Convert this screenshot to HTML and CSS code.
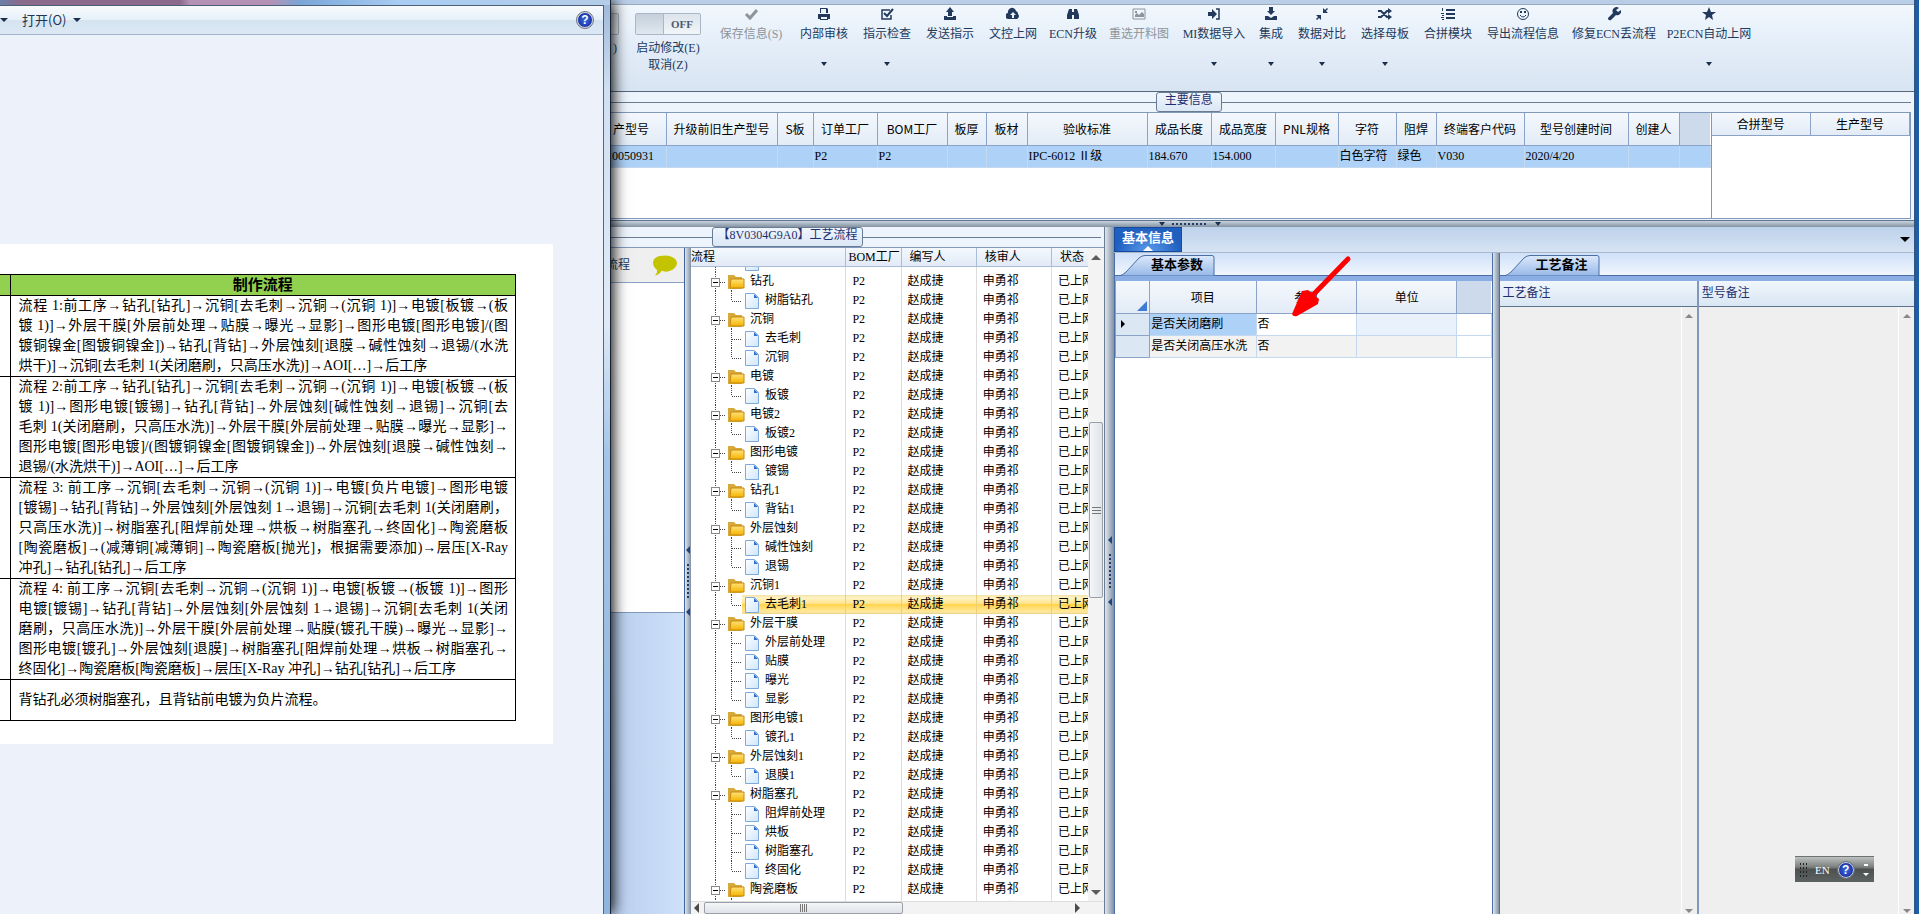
FILE: index.html
```
<!DOCTYPE html>
<html lang="zh-CN">
<head>
    <meta charset="UTF-8">
    <meta name="viewport" content="width=device-width, initial-scale=1">
    <title>工艺流程</title>
    <link rel="stylesheet" href="styles.css">
</head>
<body>
    <!-- picture viewer window -->
    <div class="viewer">
        <div class="viewer-title"></div>
        <div class="viewer-bar">
            <i class="caret"></i>
            <button type="button" class="open">打开(O) <i class="caret"></i></button>
            <button type="button" class="help" aria-label="帮助">?</button>
        </div>
        <div class="viewer-body">
            <div class="paper">
                <table class="doc">
                    <colgroup><col class="doc-left"><col></colgroup>
                    <thead>
                        <tr><th></th><th>制作流程</th></tr>
                    </thead>
                    <tbody>
                        <tr><td></td><td>
                            <span>流程 1:前工序→钻孔[钻孔]→沉铜[去毛刺→沉铜→(沉铜 1)]→电镀[板镀→(板</span>
                            <span>镀 1)]→外层干膜[外层前处理→贴膜→曝光→显影]→图形电镀[图形电镀]/(图</span>
                            <span>镀铜镍金[图镀铜镍金])→钻孔[背钻]→外层蚀刻[退膜→碱性蚀刻→退锡/(水洗</span>
                            <span class="end">烘干)]→沉铜[去毛刺 1(关闭磨刷，只高压水洗)]→AOI[…]→后工序</span>
                        </td></tr>
                        <tr><td></td><td>
                            <span>流程 2:前工序→钻孔[钻孔]→沉铜[去毛刺→沉铜→(沉铜 1)]→电镀[板镀→(板</span>
                            <span>镀 1)]→图形电镀[镀锡]→钻孔[背钻]→外层蚀刻[碱性蚀刻→退锡]→沉铜[去</span>
                            <span>毛刺 1(关闭磨刷，只高压水洗)]→外层干膜[外层前处理→贴膜→曝光→显影]→</span>
                            <span>图形电镀[图形电镀]/(图镀铜镍金[图镀铜镍金])→外层蚀刻[退膜→碱性蚀刻→</span>
                            <span class="end">退锡/(水洗烘干)]→AOI[…]→后工序</span>
                        </td></tr>
                        <tr><td></td><td>
                            <span>流程 3: 前工序→沉铜[去毛刺→沉铜→(沉铜 1)]→电镀[负片电镀]→图形电镀</span>
                            <span>[镀锡]→钻孔[背钻]→外层蚀刻[外层蚀刻 1→退锡]→沉铜[去毛刺 1(关闭磨刷，</span>
                            <span>只高压水洗)]→树脂塞孔[阻焊前处理→烘板→树脂塞孔→终固化]→陶瓷磨板</span>
                            <span>[陶瓷磨板]→(减薄铜[减薄铜]→陶瓷磨板[抛光]，根据需要添加)→层压[X-Ray</span>
                            <span class="end">冲孔]→钻孔[钻孔]→后工序</span>
                        </td></tr>
                        <tr><td></td><td>
                            <span>流程 4: 前工序→沉铜[去毛刺→沉铜→(沉铜 1)]→电镀[板镀→(板镀 1)]→图形</span>
                            <span>电镀[镀锡]→钻孔[背钻]→外层蚀刻[外层蚀刻 1→退锡]→沉铜[去毛刺 1(关闭</span>
                            <span>磨刷，只高压水洗)]→外层干膜[外层前处理→贴膜(镀孔干膜)→曝光→显影]→</span>
                            <span>图形电镀[镀孔]→外层蚀刻[退膜]→树脂塞孔[阻焊前处理→烘板→树脂塞孔→</span>
                            <span class="end">终固化]→陶瓷磨板[陶瓷磨板]→层压[X-Ray 冲孔]→钻孔[钻孔]→后工序</span>
                        </td></tr>
                        <tr class="note"><td></td><td><span class="end">背钻孔必须树脂塞孔，且背钻前电镀为负片流程。</span></td></tr>
                    </tbody>
                </table>
            </div>
        </div>
    </div>

    <!-- main program -->
    <div class="app">
        <div class="caption"></div>
        <div class="ribbon">
            <div class="switch-item cut"><div class="switch"></div><span>)</span></div>
            <div class="switch-item">
                <button type="button" class="switch"><i></i><b>OFF</b></button>
                <span>启动修改(E)</span>
                <span>取消(Z)</span>
            </div>
            <button type="button" class="tool off"><svg viewBox="0 0 14 14"><path d="M2 7l4 4 7-8" fill="none" stroke="currentColor" stroke-width="3"/></svg><span>保存信息(S)</span></button>
            <button type="button" class="tool"><svg viewBox="0 0 14 14"><path d="M3 1h7l1 1v4H3zM1 7h12v5h-2V9H3v3H1z"/><path d="M4 2h5v4H4z" fill="#eef4fb"/><path d="M3 9h8v4H3z"/><path d="M4 10h6v2H4z" fill="#eef4fb"/></svg><span>内部审核</span><i class="caret"></i></button>
            <button type="button" class="tool"><svg viewBox="0 0 14 14"><path d="M11 8v4H2V3h8" fill="none" stroke="currentColor" stroke-width="1.5"/><path d="M4 6l3 3 6-7" fill="none" stroke="currentColor" stroke-width="2"/></svg><span>指示检查</span><i class="caret"></i></button>
            <button type="button" class="tool"><svg viewBox="0 0 14 14"><path d="M7 0l4 5H9v4H5V5H3zM1 9h3v1h6V9h3v4H1z"/></svg><span>发送指示</span></button>
            <button type="button" class="tool"><svg viewBox="0 0 14 14"><path d="M3 12a3 3 0 0 1-1-6 4 4 0 0 1 8-2 3 3 0 0 1 2 3 3 3 0 0 1-1 5z"/><path d="M7 5l3 3H8v3H6V8H4z" fill="#eef4fb"/></svg><span>文控上网</span></button>
            <button type="button" class="tool"><svg viewBox="0 0 14 14"><path d="M3 2h3v3h2V2h3l2 6v4H8V8H6v4H1V8z"/></svg><span>ECN升级</span></button>
            <button type="button" class="tool off"><svg viewBox="0 0 14 14"><path d="M1 2h12v10H1z" fill="none" stroke="currentColor"/><path d="M3 10V8l2-2 2 2 3-3 2 2v3zM3 4h2v2H3z"/></svg><span>重选开料图</span></button>
            <button type="button" class="tool"><svg viewBox="0 0 14 14"><path d="M1 5h4V2l5 5-5 5V9H1z"/><path d="M9 2h3v10H9" fill="none" stroke="currentColor" stroke-width="1.5"/></svg><span>MI数据导入</span><i class="caret"></i></button>
            <button type="button" class="tool"><svg viewBox="0 0 14 14"><path d="M5 0h4v4h2L7 8 3 4h2zM1 9h3l3 2 3-2h3v4H1z"/></svg><span>集成</span><i class="caret"></i></button>
            <button type="button" class="tool"><svg viewBox="0 0 14 14"><path d="M8 1v5h5l-2-2 2-2-1-1-2 2zM6 13V8H1l2 2-2 2 1 1 2-2z"/></svg><span>数据对比</span><i class="caret"></i></button>
            <button type="button" class="tool"><svg viewBox="0 0 14 14"><path d="M0 4h3l6 6h2M0 10h3l6-6h2" fill="none" stroke="currentColor" stroke-width="2"/><path d="M10 1l4 3-4 3zM10 7l4 3-4 3z"/></svg><span>选择母板</span><i class="caret"></i></button>
            <button type="button" class="tool"><svg viewBox="0 0 14 14"><path d="M5 2h9v2H5zM5 6h9v2H5zM5 10h9v2H5zM1 1h1v3H1zM0 6h3v1H0zM1 8h2v1H1zM0 10h3v1H0zM1 12h2v1H1z"/></svg><span>合拼模块</span></button>
            <button type="button" class="tool"><svg viewBox="0 0 14 14"><circle cx="7" cy="7" r="5.5" fill="none" stroke="currentColor"/><path d="M4 8q3 4 6 0" fill="none" stroke="currentColor"/><path d="M4 4h2v2H4zM8 4h2v2H8z"/></svg><span>导出流程信息</span></button>
            <button type="button" class="tool"><svg viewBox="0 0 14 14"><path d="M1 11l5-5a4 4 0 0 1 6-5L9 3l2 2 3-2a4 4 0 0 1-5 5l-5 5a2 2 0 0 1-3-2z"/></svg><span>修复ECN丢流程</span></button>
            <button type="button" class="tool"><svg viewBox="0 0 14 14"><path d="M7 0l2 5h5l-4 3 1 5-4-3-4 3 1-5-4-3h5z"/></svg><span>P2ECN自动上网</span><i class="caret"></i></button>
        </div>

        <div class="info">
            <div class="group-title main-title"><span>主要信息</span></div>
            <div class="info-tables">
                <div class="info-left">
                    <table class="grid">
                        <colgroup>
                            <col style="width:55px"><col style="width:111px"><col style="width:36px"><col style="width:64px"><col style="width:70px">
                            <col style="width:39px"><col style="width:41px"><col style="width:120px"><col style="width:64px"><col style="width:64px">
                            <col style="width:63px"><col style="width:58px"><col style="width:40px"><col style="width:88px"><col style="width:104px">
                            <col style="width:51px"><col style="width:31px">
                        </colgroup>
                        <thead>
                            <tr><th class="left">产型号</th><th>升级前旧生产型号</th><th>S板</th><th>订单工厂</th><th>BOM工厂</th><th>板厚</th><th>板材</th><th>验收标准</th><th>成品长度</th><th>成品宽度</th><th>PNL规格</th><th>字符</th><th>阻焊</th><th>终端客户代码</th><th>型号创建时间</th><th>创建人</th><th class="blank"></th></tr>
                        </thead>
                        <tbody>
                            <tr><td>0050931</td><td></td><td></td><td>P2</td><td>P2</td><td></td><td></td><td>IPC-6012 Ⅱ级</td><td>184.670</td><td>154.000</td><td></td><td>白色字符</td><td>绿色</td><td>V030</td><td>2020/4/20</td><td></td><td></td></tr>
                        </tbody>
                    </table>
                </div>
                <div class="info-right">
                    <table class="grid small">
                        <thead><tr><th>合拼型号</th><th>生产型号</th></tr></thead>
                    </table>
                </div>
            </div>
        </div>

        <div class="split-h"><i class="caret"></i><i class="dots"></i><i class="caret"></i></div>

        <div class="lower">
            <div class="process">
                <div class="group-title process-title"><span>【8V0304G9A0】工艺流程</span></div>
                <div class="process-row">
                    <div class="side">
                        <div class="side-head">流程
                            <svg viewBox="0 0 25 21"><path d="M13 0c7 0 12 4 12 8s-5 9-12 9l-4-1q-2 4-7 5 3-3 2-6-4-3-4-7 0-8 13-8z" fill="#c3c300"/></svg>
                        </div>
                        <div class="side-body"></div>
                    </div>
                    <div class="split-v"><i class="tri"></i><i class="dots"></i><i class="tri"></i></div>
                    <div class="tree">
                        <div class="tree-main">
                            <div class="tree-scroll" id="treescroll">
                                <table>
                                    <colgroup><col class="c-name"><col class="c-bom"><col class="c-writer"><col class="c-check"><col class="c-state"></colgroup>
                                    <thead>
                                        <tr><th>流程</th><th class="tight">BOM工厂</th><th>编写人</th><th>核审人</th><th>状态</th></tr>
                                    </thead>
                                    <tbody id="treebody"></tbody>
                                </table>
                            </div>
                            <div class="bar-v"><i class="up"></i><div class="thumb"></div><i class="down"></i></div>
                        </div>
                        <div class="bar-h"><i class="prev"></i><div class="thumb"></div><i class="next"></i></div>
                    </div>
                </div>
            </div>
            <div class="split-v wide"><i class="tri"></i><i class="dots"></i><i class="tri"></i></div>

            <div class="details">
                <div class="dock"><button type="button">基本信息</button><i class="caret"></i></div>
                <div class="detail-row">
                    <div class="params">
                        <div class="tabs">
                            <svg viewBox="0 0 96 21"><use href="#tabshape"/></svg><b>基本参数</b>
                        </div>
                        <table class="grid">
                            <colgroup><col style="width:34px"><col style="width:106px"><col style="width:100px"><col style="width:100px"><col style="width:34px"></colgroup>
                            <thead><tr><th class="corner"></th><th>项目</th><th>参数</th><th>单位</th><th class="blank"></th></tr></thead>
                            <tbody>
                                <tr><td class="rowhead"><i></i></td><td class="sel">是否关闭磨刷</td><td>否</td><td class="pale"></td><td></td></tr>
                                <tr class="alt"><td class="rowhead"></td><td>是否关闭高压水洗</td><td>否</td><td></td><td class="none"></td></tr>
                            </tbody>
                        </table>
                        <svg class="mark" viewBox="0 0 64 66"><path d="M57 5L20 43" stroke="#f00" stroke-width="5" stroke-linecap="round"/><path d="M1 60L11 37l6-1 11 9-1 5-21 12q-4 1-5-2z" fill="#f00"/></svg>
                    </div>
                    <div class="split-v"></div>
                    <div class="notes">
                        <div class="tabs">
                            <svg viewBox="0 0 96 21"><use href="#tabshape"/></svg><b>工艺备注</b>
                        </div>
                        <div class="note-cols">
                            <div class="note-col first">
                                <label for="note1">工艺备注</label>
                                <div class="note-box"><textarea id="note1"></textarea><div class="bar-v"><i class="up"></i><i class="down"></i></div></div>
                            </div>
                            <div class="note-col">
                                <label for="note2">型号备注</label>
                                <div class="note-box"><textarea id="note2"></textarea><div class="bar-v"><i class="up"></i><i class="down"></i></div></div>
                            </div>
                        </div>
                    </div>
                </div>
            </div>
        </div>
    </div>

    <!-- input language bar -->
    <div class="lang">
        <i class="grip"></i><span>EN</span><button type="button" class="help" aria-label="帮助">?</button>
        <svg viewBox="0 0 6 14"><path d="M1 1h4v2H1zM0 10h6l-3 3z" fill="#fff"/></svg>
    </div>

    <svg class="defs">
        <defs>
            <linearGradient id="tabfill" x1="0" y1="0" x2="0" y2="1"><stop offset="0" stop-color="#dce9fb"/><stop offset="1" stop-color="#96b8e8"/></linearGradient>
            <linearGradient id="gold" x1="0" y1="0" x2="0" y2="1"><stop offset="0" stop-color="#ffe27a"/><stop offset="1" stop-color="#f5b400"/></linearGradient>
            <linearGradient id="sheet" x1="0" y1="0" x2="1" y2="1"><stop offset="0" stop-color="#fff"/><stop offset="1" stop-color="#cfe6fb"/></linearGradient>
            <path id="tabshape" d="M0 21Q4 20 7 17L20 3q3-2.500 6-2.500H93q2 0 2 2V21z" fill="url(#tabfill)" stroke="#4a6ea5"/>
            <g id="folder"><path d="M0 1h6l2 2h6v12H0z" fill="#d7a83a"/><path d="M3 5h13v9H2z" fill="url(#gold)" stroke="#c88a10"/></g>
            <g id="file"><path d="M.5.5h9l4 4v11H.5z" fill="url(#sheet)" stroke="#7da9dd"/><path d="M9 1l4 4H9z" fill="#2f6fd0"/></g>
        </defs>
    </svg>
    <script src="script.js"></script>
</body>
</html>
```
FILE: styles.css
```
* {
    box-sizing: border-box;
}
body {
    margin: 0;
    display: flex;
    height: 100vh;
    overflow: hidden;
    background-color: #1d5ea8;
    color: #000;
    font-family: "Liberation Serif", "Noto Sans CJK SC", serif;
    font-size: 12px;
    line-height: 16px;
}
button {
    margin: 0;
    padding: 0;
    border: 0;
    background: none;
    color: inherit;
    font: inherit;
}
table {
    border-collapse: collapse;
    table-layout: fixed;
    width: 100%;
}
i {
    display: block;
    flex: none;
}
.defs {
    position: absolute;
    width: 0;
    height: 0;
}
.caret {
    width: 0;
    border: 3px solid transparent;
    border-top: 4px solid #1b2f4d;
    border-bottom: 0;
}

/* picture viewer */
.viewer {
    flex: none;
    width: 611px;
    position: relative;
    z-index: 2;
    display: flex;
    flex-direction: column;
    border-right: 1px solid #16202e;
    box-shadow: 2px 0 14px #000;
    background: linear-gradient(#9db8d8, #cfe0f3 10%, #dfeaf6 35%, #a3c4e8 50%, #8fb4df);
}
.viewer-title {
    height: 5px;
    background: linear-gradient(90deg, #6a7fa8, #8b6a8c 20px, #8b6a8c 180px, #b592b3 190px, #b592b3 270px, #7aa6d8 300px, #a9cdf3 400px, #b5cde8);
}
.viewer-bar {
    display: flex;
    align-items: center;
    height: 30px;
    margin-right: 6px;
    padding-right: 10px;
    border: solid #4a6078;
    border-width: 1px 1px 1px 0;
    border-bottom-color: #9fb4ca;
    background: linear-gradient(#f8fbfe, #e6f0f8 50%, #d5e3f1 51%, #dce8f4);
    color: #1e3554;
    font-family: "Noto Sans CJK SC", sans-serif;
    font-size: 13px;
}
.viewer-bar .open {
    display: flex;
    align-items: center;
    gap: 7px;
    margin-left: 14px;
}
.viewer-bar .caret {
    border-width: 4px 4px 0;
}
.help {
    width: 16px;
    height: 16px;
    margin-left: auto;
    border: 1px solid #c9d0dc;
    border-radius: 8px;
    outline: 1px solid #6b7484;
    background: radial-gradient(#3f6be0, #0e1f92);
    color: #fff;
    font: bold 12px/14px "Liberation Sans", sans-serif;
}
.viewer-body {
    flex: 1;
    margin-right: 6px;
    padding-top: 209px;
    border-right: 1px solid #4a6a90;
    background-color: #edf2fa;
}
.paper {
    width: 553px;
    padding: 30px 37px 23px 0;
    background-color: #fff;
}
.doc {
    font-size: 14px;
    line-height: 20px;
}
.doc .doc-left {
    width: 10px;
}
.doc th, .doc td {
    padding: 0;
    border: 1px solid #000;
}
.doc th:first-child, .doc td:first-child {
    border-left: 0;
}
.doc th {
    background-color: #92d050;
    font-size: 15px;
}
.doc td + td {
    padding: 0 7px 0 8px;
}
.doc span {
    display: block;
    white-space: nowrap;
    text-align: justify;
    text-align-last: justify;
}
.doc .end {
    text-align-last: left;
}
.doc .note {
    height: 41px;
}

/* main program */
.app {
    flex: 1;
    min-width: 0;
    display: flex;
    flex-direction: column;
    margin-right: 3px;
    border-right: 2px solid #33557f;
    background-color: #eef4fc;
}
.caption {
    height: 5px;
    border-bottom: 1px solid #9aaabd;
    background-color: #b9cde6;
}
.ribbon {
    display: grid;
    grid-template-columns: 8px 68px 68px 48px 48px 48px 48px 42px 60px 60px 24px 48px 48px 48px 72px 80px 80px;
    column-gap: 15px;
    height: 87px;
    padding-top: 2px;
    border-bottom: 1px solid #56677c;
    background: linear-gradient(#f1f7fd, #e3edf8 50%, #d8e4f2);
    color: #22395c;
}
.switch-item {
    display: flex;
    flex-direction: column;
    align-items: center;
    padding-top: 6px;
    white-space: nowrap;
}
.switch-item span {
    line-height: 17px;
}
.switch {
    display: flex;
    align-items: center;
    width: 66px;
    height: 22px;
    margin-bottom: 5px;
    border: 1px solid #a9b6c6;
    border-radius: 2px;
    background: linear-gradient(#dce3eb, #f2f6fa);
    color: #4c5a6e;
}
.switch i {
    width: 28px;
    height: 20px;
    border-right: 1px solid #a9b6c6;
    background: linear-gradient(#c5d0dc, #dfe7ef);
}
.switch b {
    flex: 1;
    font-size: 11px;
}
.cut .switch {
    width: 8px;
    border-left: 0;
}
.tool {
    display: grid;
    grid-template-rows: 16px 16px 28px;
    justify-items: center;
    justify-content: center;
    align-content: start;
    row-gap: 3px;
    white-space: nowrap;
}
.tool svg {
    width: 14px;
    height: 14px;
    fill: currentColor;
}
.tool .caret {
    align-self: end;
    margin-bottom: 7px;
}
.tool.off {
    color: #8d949c;
}

.group-title {
    display: flex;
    align-items: center;
    height: 20px;
    padding-right: 3px;
    color: #1f2f6e;
}
.group-title::before, .group-title::after {
    content: "";
    border-top: 1px solid #6a7c92;
}
.group-title span {
    height: 20px;
    padding: 0 8px;
    border: 1px solid #6a7c92;
    border-radius: 3px;
    background: linear-gradient(#eef5fd, #dbe7f5);
    line-height: 14px;
    white-space: nowrap;
}
.main-title::before {
    flex: 547;
}
.main-title::after {
    flex: 692;
}
.info {
    height: 129px;
    border-bottom: 1px solid #5f738c;
}
.info-tables {
    display: flex;
    height: 107px;
    margin-right: 3px;
    border: solid #7f98bc;
    border-width: 1px 1px 1px 0;
    background-color: #fff;
}
.info-left {
    flex: 1099;
    border-right: 1px solid #7f98bc;
}
.info-right {
    flex: 200;
}
.grid th {
    height: 32px;
    padding: 0;
    border: solid #8ba3c7;
    border-width: 0 1px 1px 0;
    background: linear-gradient(#f4f8fd, #e2ebf6);
    font-family: "Noto Sans CJK SC", sans-serif;
    font-weight: normal;
    white-space: nowrap;
}
.grid .blank {
    border-right: 0;
    background: #cddaeb;
}
.grid .left {
    padding-left: 2px;
    text-align: left;
}
.grid.small th {
    height: 22px;
}
.grid td {
    height: 22px;
    padding: 0 0 0 1px;
    border: solid #c4d8f0;
    border-width: 0 1px 1px 0;
    white-space: nowrap;
    overflow: hidden;
}
.info .grid td {
    background-color: #add1f7;
}
.split-h {
    display: flex;
    align-items: center;
    justify-content: center;
    gap: 7px;
    height: 6px;
    padding-right: 146px;
    background: linear-gradient(#c9d4df, #8492a1);
}
.split-h .dots {
    width: 36px;
    height: 2px;
    background: repeating-linear-gradient(90deg, #1f3a6b 0 2px, transparent 2px 4px);
}
.lower {
    flex: 1;
    min-height: 0;
    display: flex;
}

/* process tree */
.process {
    flex: none;
    width: 494px;
    display: flex;
    flex-direction: column;
    border-right: 1px solid #6a7c92;
}
.process-title::before {
    width: 101px;
}
.process-title::after {
    flex: 1;
}
.process-title span {
    width: 151px;
    padding: 0;
    text-align: center;
}
.process-row {
    flex: 1;
    min-height: 0;
    display: flex;
    border-top: 1px solid #7f98bc;
}
.side {
    width: 74px;
    display: flex;
    flex-direction: column;
    border-right: 1px solid #3f659c;
    background: linear-gradient(90deg, #b9cfee, #cfe1f9);
}
.side-head {
    display: flex;
    align-items: center;
    justify-content: space-between;
    height: 35px;
    margin-left: -5px;
    padding-right: 7px;
    border-bottom: 1px solid #8ba3c7;
    background-color: #efefef;
    color: #22395c;
}
.side-head svg {
    width: 24px;
    height: 21px;
}
.side-body {
    height: 330px;
    border-bottom: 1px solid #7f98bc;
    background-color: #fff;
}
.split-v {
    flex: none;
    width: 6px;
    display: flex;
    flex-direction: column;
    align-items: center;
    justify-content: center;
    gap: 10px;
    background: linear-gradient(90deg, #dfe6ee, #8291a3);
}
.split-v.wide {
    width: 9px;
}
.split-v .dots {
    width: 2px;
    height: 34px;
    background: repeating-linear-gradient(#1f3a6b 0 2px, transparent 2px 4px);
}
.split-v .tri {
    border: 4px solid transparent;
    border-right: 4px solid #24427a;
    border-left: 0;
}
.tree {
    flex: 1;
    min-width: 0;
    display: flex;
    flex-direction: column;
    background-color: #fff;
}
.tree-main {
    flex: 1;
    min-height: 0;
    display: flex;
}
.tree-scroll {
    flex: 1;
    min-width: 0;
    overflow: hidden;
}
.tree table {
    border-collapse: separate;
    border-spacing: 0;
}
.c-name {
    width: 155px;
}
.c-bom {
    width: 55px;
}
.c-writer, .c-check {
    width: 75px;
}
.c-state {
    width: 36px;
}
.tree th {
    position: sticky;
    top: 0;
    height: 19px;
    padding: 0 0 0 8px;
    border-right: 1px solid #a9bdd8;
    border-bottom: 1px solid #a9bdd8;
    background: linear-gradient(#f4f8fd, #e0eaf6);
    font-weight: normal;
    line-height: 18px;
    text-align: left;
    white-space: nowrap;
}
.tree th:first-child {
    padding-left: 0;
}
.tree .tight {
    padding-left: 2px;
}
.tree td {
    height: 19px;
    padding: 0 0 0 6px;
    border-right: 1px solid #dcdcdc;
    line-height: 19px;
    white-space: nowrap;
    overflow: hidden;
}
.tree th:last-child, .tree td:last-child {
    border-right: 0;
}
.tree td:first-child {
    padding: 0;
}
.node {
    display: flex;
    height: 19px;
}
.node svg {
    flex: none;
    width: 59px;
    height: 19px;
}
.node.child svg {
    width: 74px;
}
.tree .picked td {
    border-right-color: #f0cf70;
    background: linear-gradient(#f4e3a8, #fff3c4 15%, #ffe48c 45%, #ffd54f 50%, #ffe9a0 90%, #e6cf86) no-repeat;
}
.tree .picked td:first-child {
    background-position: 51px 0;
}
.bar-v {
    flex: none;
    width: 16px;
    display: flex;
    flex-direction: column;
    align-items: center;
    padding: 7px 0 6px;
    background-color: #f3f3f3;
}
.bar-v .up, .bar-v .down {
    border: 5px solid transparent;
    border-top: 0;
    border-bottom: 5px solid #5d5d5d;
}
.bar-v .down {
    margin-top: auto;
    border-top: 5px solid #5d5d5d;
    border-bottom: 0;
}
.thumb {
    border: 1px solid #9aa0a8;
    border-radius: 2px;
}
.bar-v .thumb {
    width: 14px;
    height: 176px;
    margin-top: 162px;
    background: repeating-linear-gradient(#777 0 1px, transparent 1px 3px) center / 9px 7px no-repeat, linear-gradient(90deg, #f4f6f8, #dfe3e8);
}
.bar-h {
    flex: none;
    display: flex;
    align-items: center;
    height: 13px;
    padding: 0 24px 0 3px;
    border-top: 1px solid #ddd;
    background-color: #f3f3f3;
}
.bar-h .prev, .bar-h .next {
    border: 5px solid transparent;
    border-left: 0;
    border-right: 5px solid #4a4a4a;
}
.bar-h .next {
    margin-left: auto;
    border-right: 0;
    border-left: 5px solid #4a4a4a;
}
.bar-h .thumb {
    width: 199px;
    height: 12px;
    margin-left: 5px;
    background: repeating-linear-gradient(90deg, #777 0 1px, transparent 1px 2px) center / 7px 8px no-repeat, linear-gradient(#f4f6f8, #dfe3e8);
}

/* detail panels */
.details {
    flex: 1;
    min-width: 0;
    display: flex;
    flex-direction: column;
}
.dock {
    display: flex;
    align-items: center;
    justify-content: space-between;
    height: 26px;
    padding-right: 4px;
    border-bottom: 1px solid #a9b9cd;
    background: linear-gradient(#bdd2eb, #d6e3f4);
}
.dock button {
    position: relative;
    width: 68px;
    height: 25px;
    padding-bottom: 3px;
    border: 1px solid #164a9a;
    background: radial-gradient(ellipse at bottom, #5b9bea, #1f5fc0 70%);
    color: #fff;
    font-size: 13px;
    font-weight: bold;
}
.dock button::after {
    content: "";
    position: absolute;
    left: 28px;
    bottom: 0;
    border: 5px solid transparent;
    border-top: 0;
    border-bottom-color: #fff;
}
.dock .caret {
    border-width: 5px 5px 0;
    border-top-color: #000;
}
.detail-row {
    flex: 1;
    min-height: 0;
    display: flex;
}
.params {
    flex: 377;
    min-width: 0;
    position: relative;
    border: solid #4a6ea5;
    border-width: 0 1px;
    background-color: #fff;
}
.params .grid {
    border-left: 1px solid #8ba3c7;
}
.tabs {
    display: flex;
    align-items: flex-end;
    position: relative;
    height: 28px;
    padding-left: 4px;
    border-bottom: 5px solid #8bafe4;
    background: linear-gradient(#cfe0f8, #f2f7fe);
    box-shadow: inset 0 -1px #4a6ea5;
}
.tabs svg {
    width: 96px;
    height: 21px;
}
.tabs b {
    position: absolute;
    left: 36px;
    top: 4px;
    font-size: 13px;
}
.corner {
    position: relative;
}
.corner::after {
    content: "";
    position: absolute;
    right: 2px;
    bottom: 2px;
    border: 5px solid #3f7ad6;
    border-top-color: transparent;
    border-left-color: transparent;
}
.grid td.rowhead {
    padding-left: 5px;
    border-color: #8ba3c7;
    background-color: #dce7f4;
}
.rowhead i {
    width: 0;
    border: 4px solid transparent;
    border-left-color: #000;
    border-right: 0;
}
.sel {
    background-color: #add1f7;
}
.pale {
    background-color: #e8f1fc;
}
.alt td {
    background-color: #f2f2f2;
}
.alt .none {
    background-color: #fff;
}
.mark {
    position: absolute;
    left: 176px;
    top: 1px;
    width: 64px;
    height: 66px;
}
.notes {
    flex: 415;
    min-width: 0;
    display: flex;
    flex-direction: column;
    border-left: 1px solid #4a6ea5;
}
.note-cols {
    flex: 1;
    min-height: 0;
    display: flex;
}
.note-col {
    flex: 216;
    display: flex;
    flex-direction: column;
}
.note-col.first {
    flex: 198;
    border-right: 2px solid #7f98bc;
}
.note-col label {
    height: 26px;
    padding-left: 3px;
    border-bottom: 1px solid #5f738c;
    background: linear-gradient(#f0f6fc, #d9e6f3);
    color: #1f2f6e;
    line-height: 24px;
}
.note-box {
    flex: 1;
    min-height: 0;
    display: flex;
    background-color: #efefef;
}
.note-box textarea {
    flex: 1;
    min-width: 0;
    border: 0;
    background: none;
    resize: none;
}
.note-box .bar-v {
    padding: 7px 0 1px;
    border-left: 1px solid #fff;
    background: none;
}
.note-box .up, .note-box .down {
    border-width: 4px;
    border-top-width: 0;
    border-bottom-color: #888;
}
.note-box .down {
    border-width: 4px 4px 0;
    border-top-color: #888;
}

/* language bar */
.lang {
    position: absolute;
    right: 45px;
    bottom: 32px;
    z-index: 3;
    display: flex;
    align-items: center;
    gap: 8px;
    width: 79px;
    height: 26px;
    padding: 0 5px 0 4px;
    border-top: 1px solid #6f736f;
    background: linear-gradient(#bcc0be, #7c807f 40%, #4d5251 50%, #5d6262);
    color: #fff;
}
.lang span {
    font-size: 11px;
}
.lang .grip {
    width: 8px;
    height: 16px;
    background: radial-gradient(#222 1px, transparent 1px) 0 0 / 3px 4px;
}
.lang .help {
    flex: none;
    margin: 0;
}
.lang svg {
    flex: none;
    width: 6px;
    height: 14px;
    margin-left: auto;
}
```
FILE: script.js
```
// parent step, then the steps below it
const steps = [
    ['', '去毛刺'],
    ['钻孔', '树脂钻孔'],
    ['沉铜', '去毛刺', '沉铜'],
    ['电镀', '板镀'],
    ['电镀2', '板镀2'],
    ['图形电镀', '镀锡'],
    ['钻孔1', '背钻1'],
    ['外层蚀刻', '碱性蚀刻', '退锡'],
    ['沉铜1', '去毛刺1'],
    ['外层干膜', '外层前处理', '贴膜', '曝光', '显影'],
    ['图形电镀1', '镀孔1'],
    ['外层蚀刻1', '退膜1'],
    ['树脂塞孔', '阻焊前处理', '烘板', '树脂塞孔', '终固化'],
    ['陶瓷磨板', '陶瓷磨板', '抛光']
];
const picked = '去毛刺1';
const dotted = 'fill="none" stroke="#444" stroke-dasharray="1 1"';

function parenticon() {
    return '<svg viewBox="0 0 59 19"><path d="M24.500 0V19M29 10.500H35M40.500 16V19" ' + dotted + '/>' +
        '<rect x="20.500" y="6.500" width="8" height="8" fill="#fff" stroke="#888"/><path d="M22 10.500h5" stroke="#000"/>' +
        '<use href="#folder" x="37" y="2"/></svg>';
}

function childicon(last) {
    return '<svg viewBox="0 0 74 19"><path d="M24.500 0V19M40.500 0V' + (last ? 10 : 19) + 'M41 10.500H51" ' + dotted + '/>' +
        '<use href="#file" x="54" y="2"/></svg>';
}

function addrow(name, cls, icon) {
    var row = '<tr' + (name == picked ? ' class="picked"' : '') + '>';
    row += '<td><div class="node ' + cls + '">' + icon + name + '</div></td>';
    row += '<td>P2</td><td>赵成捷</td><td>申勇祁</td><td>已上网</td></tr>';
    return row;
}

var rows = '';
for (const group of steps) {
    if (group[0] != '')
        rows += addrow(group[0], '', parenticon());
    for (let x = 1; x < group.length; x++)
        rows += addrow(group[x], 'child', childicon(x == group.length - 1));
}
document.getElementById('treebody').innerHTML = rows;
document.getElementById('treescroll').scrollTop = 14;
```
